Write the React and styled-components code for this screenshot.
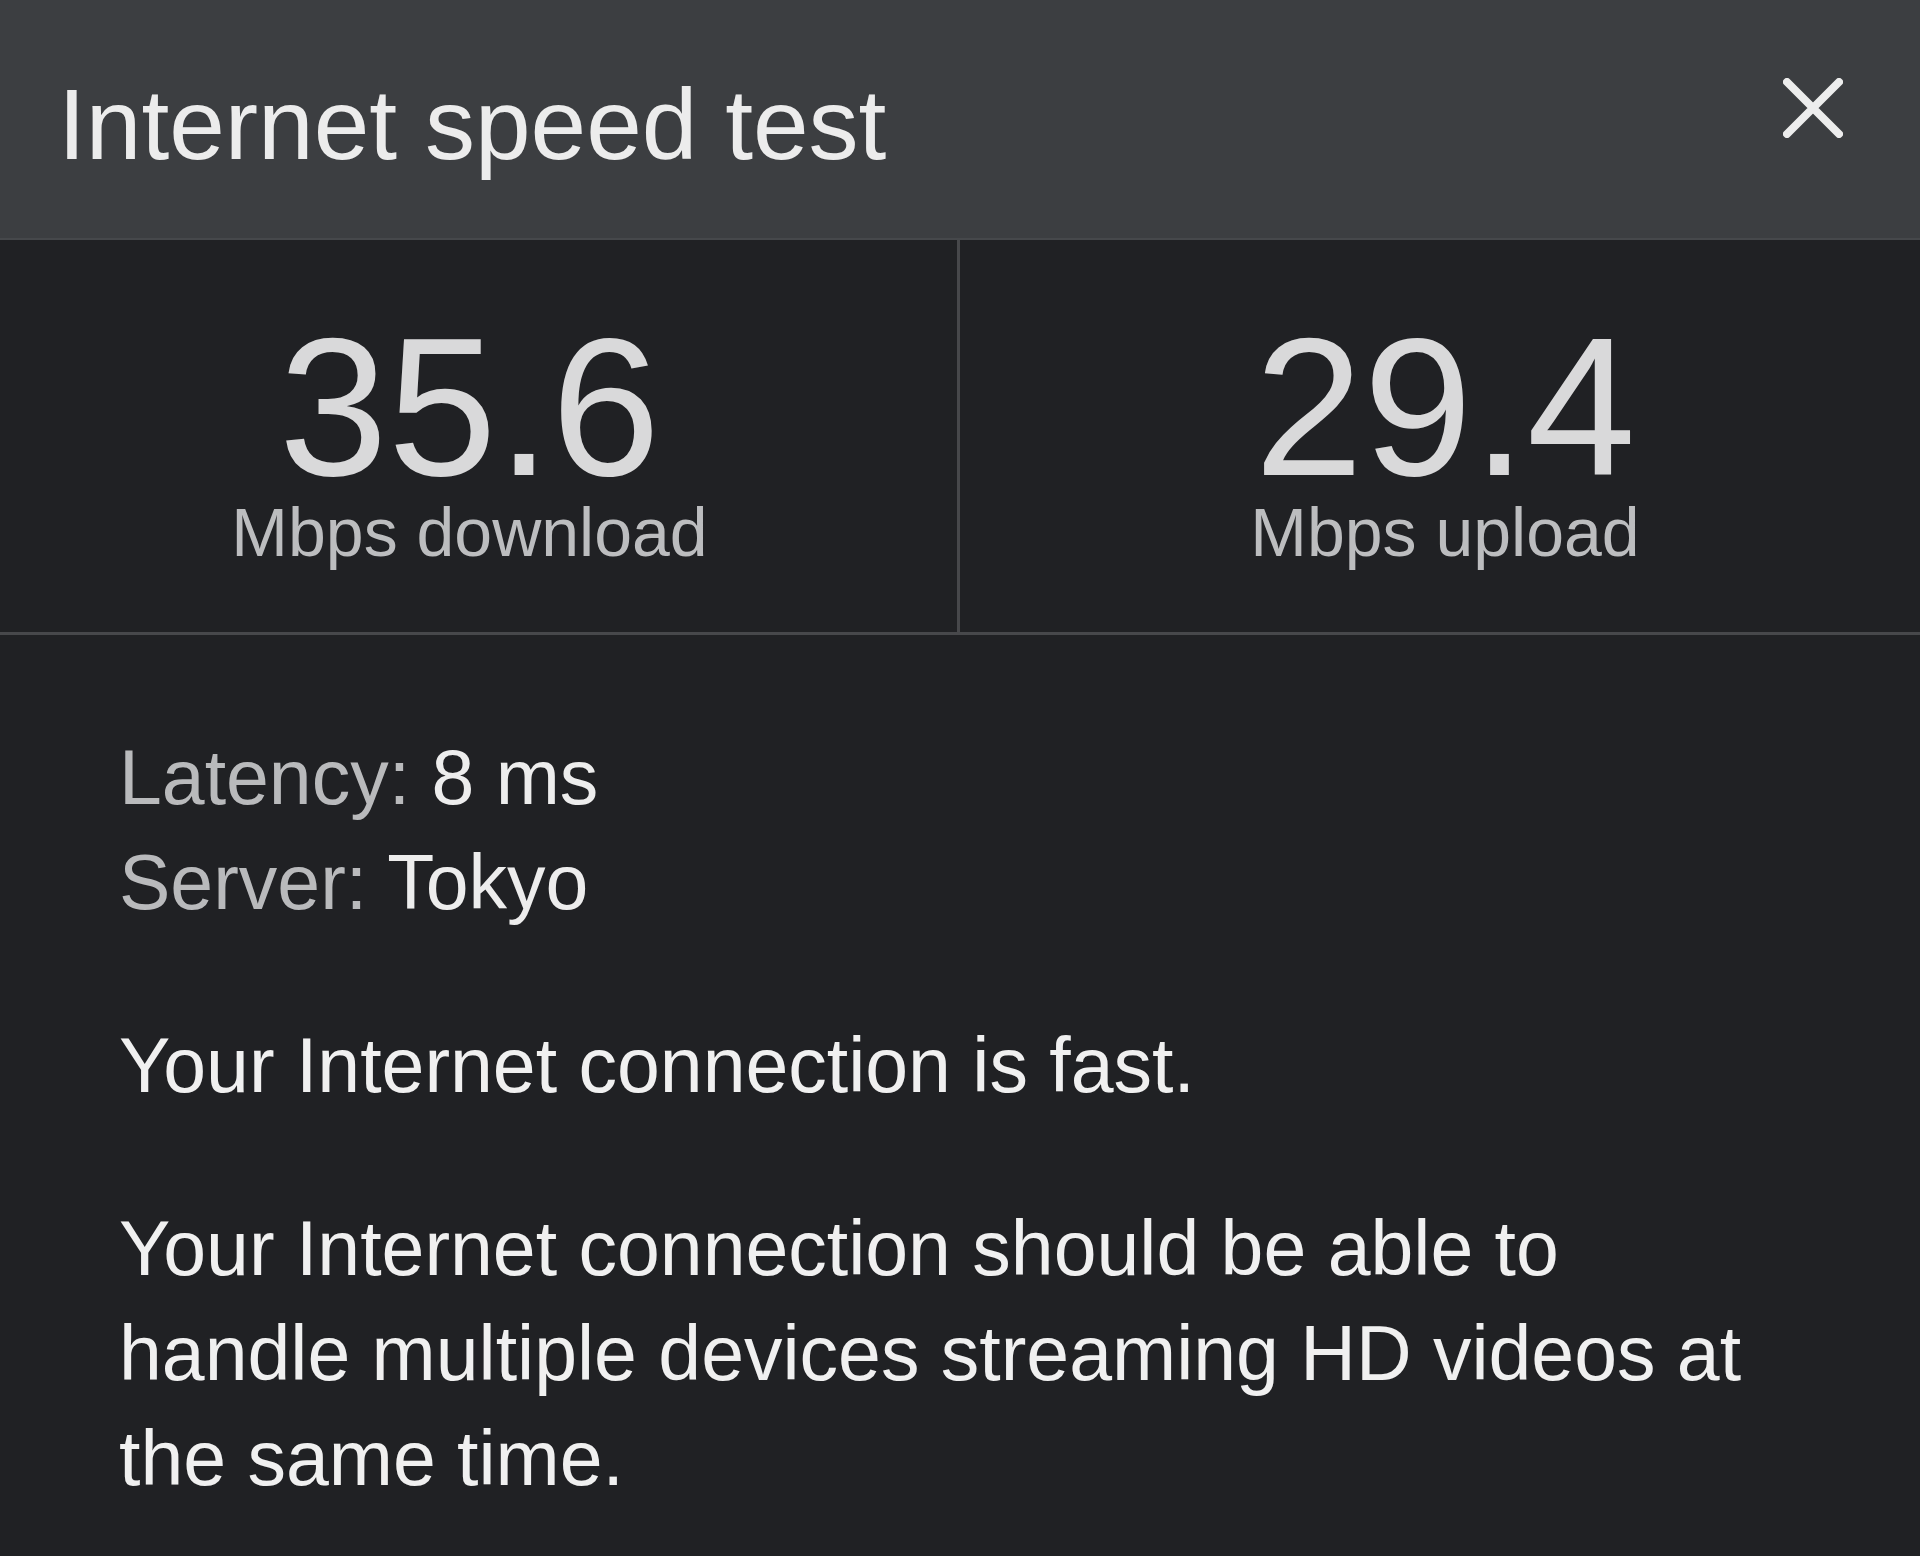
import React from 'react'
import styled, {createGlobalStyle} from 'styled-components'

const GlobalStyle = createGlobalStyle`
  html, body {
    margin: 0;
    padding: 0;
    background-color: #202124;
  }
  * {
    box-sizing: border-box;
  }
`

const Panel = styled.div`
  background-color: #202124;
  font-family: "Liberation Sans", Arial, sans-serif;
  min-height: 100vh;
  width: 100%;
`

const Header = styled.div`
  align-items: flex-start;
  background-color: #3c3e41;
  border-bottom: 2px solid #46484b;
  display: flex;
  height: 240px;
  justify-content: space-between;
  padding: 74px 77px 0 58px;
`

const Title = styled.h1`
  color: #ececec;
  font-size: 100px;
  font-weight: 400;
  line-height: 100px;
  margin: 0;
`

const Close = styled.button`
  background: none;
  border: 0;
  cursor: pointer;
  height: 60px;
  margin-top: 4px;
  padding: 0;
  width: 60px;
`

const Stats = styled.div`
  border-bottom: 3px solid #47484b;
  display: grid;
  grid-template-columns: 1fr 1fr;
`

const Stat = styled.div`
  border-right: ${p => (p.$divider ? '3px solid #47484b' : '0')};
  display: flex;
  justify-content: center;
  padding: 72px 0 72px;
`

const StatText = styled.div`
  align-items: center;
  display: flex;
  flex-direction: column;
  margin-left: ${p => p.$offset}px;
`

const Value = styled.div`
  color: #d9d9da;
  font-size: 196px;
  line-height: 192px;
`

const Unit = styled.div`
  color: #bcbdbf;
  font-size: 68px;
  line-height: 56px;
`

const Details = styled.div`
  padding: 90px 120px 0 119px;
`

const InfoLine = styled.div`
  color: #b9babc;
  font-size: 77px;
  line-height: 105px;
`

const Strong = styled.span`
  color: #ededed;
`

const Para = styled.p`
  color: #f0f0f0;
  font-size: 77px;
  line-height: 105px;
  margin: 78px 0 0;
`

const CloseIcon = () => (
  <svg width='60' height='60' viewBox='0 0 60 60'>
    <path d='M4 4 L56 56 M56 4 L4 56' stroke='#ededed' strokeWidth='8' strokeLinecap='round' />
  </svg>
)

const App = () => (
  <Panel>
    <GlobalStyle />
    <Header>
      <Title>Internet speed test</Title>
      <Close aria-label='Close'><CloseIcon /></Close>
    </Header>
    <Stats>
      <Stat $divider>
        <StatText $offset={-18}>
          <Value>35.6</Value>
          <Unit>Mbps download</Unit>
        </StatText>
      </Stat>
      <Stat>
        <StatText $offset={10}>
          <Value>29.4</Value>
          <Unit>Mbps upload</Unit>
        </StatText>
      </Stat>
    </Stats>
    <Details>
      <InfoLine>Latency: <Strong>8 ms</Strong></InfoLine>
      <InfoLine>Server: <Strong>Tokyo</Strong></InfoLine>
      <Para>Your Internet connection is fast.</Para>
      <Para>Your Internet connection should be able to handle multiple devices streaming HD videos at the same time.</Para>
    </Details>
  </Panel>
)

export default App
